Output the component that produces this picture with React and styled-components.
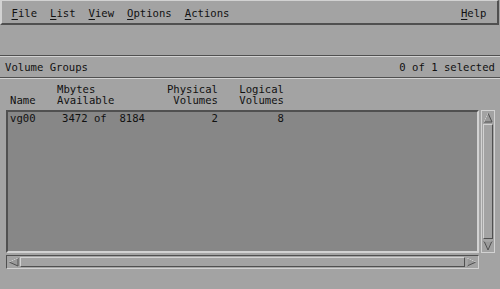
import React from 'react';
import styled, { createGlobalStyle } from 'styled-components';

const light = '#d2d2d2';
const dark = '#505050';
const face = '#a3a3a3';

const GlobalStyle = createGlobalStyle`
  body {
    margin: 0;
    background: ${face};
    font-family: "DejaVu Sans Mono", "Liberation Mono", monospace;
    font-size: 10.6px;
    color: #111;
  }
`

const Screen = styled.div`
  width: 500px;
  height: 289px;
  overflow: hidden;
  display: flex;
  flex-direction: column;
  background: ${face};
`

const MenuBar = styled.div`
  box-sizing: border-box;
  height: 25px;
  margin: 0 1px 0 0;
  display: flex;
  align-items: center;
  padding: 1px 4px 0 3px;
  border-top: 1px solid ${light};
  border-left: 2px solid ${light};
  border-bottom: 2px solid ${dark};
  border-right: 2px solid ${dark};
`

const MenuItem = styled.span`
  padding: 0 6.5px;
  white-space: pre;
  margin-left: ${p => (p.$right ? 'auto' : '0')};
  u {
    text-decoration: underline;
    text-underline-offset: 2px;
  }
`

const ToolArea = styled.div`
  height: 30px;
`

const Separator = styled.div`
  height: 1px;
  border-top: 1px solid ${dark};
  background: ${light};
`

const TitleRow = styled.div`
  height: 20px;
  display: flex;
  align-items: center;
  justify-content: space-between;
  padding: 0 5px 0 5px;
  white-space: pre;
`

const Columns = styled.div`
  display: grid;
  grid-template-columns: 47px 100px 61px 66px;
  line-height: 11px;
  white-space: pre;
`

const Header = styled(Columns)`
  padding: 5px 0 0 10px;
  height: 26px;
  align-items: start;
`

const Cell = styled.div`
  text-align: ${p => (p.$right ? 'right' : 'left')};
  padding-left: ${p => p.$pad || 0}px;
`

const ListRow = styled.div`
  display: flex;
  margin: 0 0 0 6px;
  height: 143px;
  gap: 2px;
`

const ListBox = styled.div`
  box-sizing: border-box;
  width: 473px;
  background: #878787;
  border-top: 2px solid ${dark};
  border-left: 2px solid ${dark};
  border-bottom: 2px solid ${light};
  border-right: 2px solid ${light};
  padding: 1px 0 0 2px;
`

const DataRow = styled(Columns)``

const VScroll = styled.div`
  box-sizing: border-box;
  width: 14px;
  display: flex;
  flex-direction: column;
  border: 1px solid ${light};
  background: ${face};
  padding: 1px;
`

const HScroll = styled.div`
  box-sizing: border-box;
  width: 473px;
  height: 14px;
  margin: 2px 0 0 6px;
  display: flex;
  align-items: stretch;
  border: 1px solid ${light};
  border-top-color: ${dark};
  border-left-color: ${dark};
  background: ${face};
  padding: 1px;
`

const Thumb = styled.div`
  flex: 1;
  box-sizing: border-box;
  border-top: 1px solid ${light};
  border-left: 1px solid ${light};
  border-bottom: 1px solid ${dark};
  border-right: 1px solid ${dark};
  margin: ${p => (p.$vertical ? '1px 0' : '0 1px')};
`

const Arrow = ({ dir }) => {
  const pts = {
    up: '5,1 9,10 1,10',
    down: '1,1 9,1 5,10',
    left: '1,5 10,1 10,9',
    right: '1,1 10,5 1,9',
  }[dir];
  const size = dir === 'up' || dir === 'down' ? { width: 10, height: 11 } : { width: 11, height: 10 };
  return (
    <svg {...size} viewBox={`0 0 ${size.width} ${size.height}`} style={{ display: 'block', flex: 'none' }}>
      <polygon points={pts} fill="#9a9a9a" stroke={dark} strokeWidth="1" />
      <polyline
        points={dir === 'up' ? '1,10 5,1' : dir === 'down' ? '1,1 9,1' : dir === 'left' ? '1,5 10,1' : '1,9 1,1 10,5'}
        fill="none"
        stroke={light}
        strokeWidth="1"
      />
    </svg>
  );
};

const menus = ['File', 'List', 'View', 'Options', 'Actions'];

const App = () => (
  <Screen>
    <GlobalStyle />
    <MenuBar>
      {menus.map(m => (
        <MenuItem key={m}>
          <u>{m[0]}</u>
          {m.slice(1)}
        </MenuItem>
      ))}
      <MenuItem $right>
        <u>H</u>elp
      </MenuItem>
    </MenuBar>
    <ToolArea />
    <Separator />
    <TitleRow>
      <span>Volume Groups</span>
      <span>0 of 1 selected</span>
    </TitleRow>
    <Separator />
    <Header>
      <Cell>{'\n'}Name</Cell>
      <Cell>{'Mbytes\nAvailable'}</Cell>
      <Cell $right>{'Physical\nVolumes'}</Cell>
      <Cell $right>{'Logical\nVolumes'}</Cell>
    </Header>
    <ListRow>
      <ListBox>
        <DataRow>
          <Cell>vg00</Cell>
          <Cell $pad={5}>{'3472 of  8184'}</Cell>
          <Cell $right>2</Cell>
          <Cell $right>8</Cell>
        </DataRow>
      </ListBox>
      <VScroll>
        <Arrow dir="up" />
        <Thumb $vertical />
        <Arrow dir="down" />
      </VScroll>
    </ListRow>
    <HScroll>
      <Arrow dir="left" />
      <Thumb />
      <Arrow dir="right" />
    </HScroll>
  </Screen>
);

export default App;
